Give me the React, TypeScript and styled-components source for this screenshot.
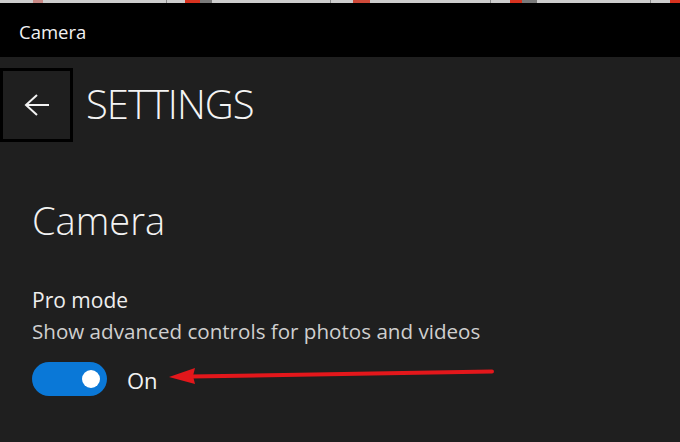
import React from "react";
import styled, { createGlobalStyle } from "styled-components";

const Global = createGlobalStyle`
  html, body { margin: 0; padding: 0; background: #1f1f1f; }
  body { font-family: "Open Sans", "Noto Sans", sans-serif; }
`;

const Window = styled.div`
  width: 680px;
  height: 442px;
  display: flex;
  flex-direction: column;
  background: #1f1f1f;
  overflow: hidden;
`;

const TopStrip = styled.div`
  height: 3px;
  flex: none;
  background: linear-gradient(
    to right,
    #cdcdcd 0 33px, #c98a86 33px 43px, #cdcdcd 43px 166px, #8a8a8a 166px 167px,
    #cdcdcd 167px 185px, #d8321f 185px 200px, #7a7a7a 200px 212px, #cdcdcd 212px 330px,
    #8a8a8a 330px 331px, #cdcdcd 331px 353px, #cf4a3a 353px 370px, #cdcdcd 370px 490px,
    #8a8a8a 490px 491px, #cdcdcd 491px 510px, #d8321f 510px 522px, #7a7a7a 522px 537px,
    #cdcdcd 537px 650px, #8a8a8a 650px 651px, #cdcdcd 651px 670px, #d8321f 670px 680px
  );
`;

const TitleBar = styled.div`
  height: 54px;
  flex: none;
  background: #000;
  display: flex;
  align-items: center;
  padding-left: 19px;
  color: #f2f2f2;
  font-size: 18.5px;
  padding-top: 2px;
  box-sizing: border-box;
`;

const Body = styled.div`
  flex: 1;
  display: flex;
  flex-direction: column;
`;

const Header = styled.div`
  display: flex;
  align-items: center;
  gap: 13px;
  margin-top: 11px;
`;

const BackButton = styled.div`
  width: 73px;
  height: 74px;
  box-sizing: border-box;
  border: 3px solid #000;
  display: flex;
  align-items: center;
  justify-content: center;
`;

const PageTitle = styled.div`
  color: #f4f4f4;
  font-size: 40px;
  font-weight: 300;
  letter-spacing: -1px;
  line-height: 1;
  margin-top: -2px;
`;

const Content = styled.div`
  padding-left: 32px;
  display: flex;
  flex-direction: column;
`;

const SectionTitle = styled.div`
  color: #f2f2f2;
  font-size: 38px;
  font-weight: 300;
  line-height: 1;
  margin-top: 59px;
`;

const Label = styled.div`
  color: #eeeeee;
  font-size: 21px;
  line-height: 1;
  margin-top: 51px;
`;

const Description = styled.div`
  color: #cfcfcf;
  font-size: 20.6px;
  line-height: 1;
  margin-top: 10px;
`;

const ToggleRow = styled.div`
  display: flex;
  align-items: center;
  margin-top: 20px;
`;

const Toggle = styled.div<{ on: boolean }>`
  width: 75px;
  height: 34px;
  border-radius: 17px;
  background: ${(p) => (p.on ? "#0a78d7" : "transparent")};
  display: flex;
  align-items: center;
  justify-content: ${(p) => (p.on ? "flex-end" : "flex-start")};
  padding: 0 7px;
  box-sizing: border-box;
`;

const Knob = styled.div`
  width: 18px;
  height: 18px;
  border-radius: 50%;
  background: #fff;
`;

const ToggleText = styled.div`
  color: #f2f2f2;
  font-size: 22px;
  margin-left: 20px;
  line-height: 1;
  margin-top: 2px;
`;

const Arrow = styled.svg`
  margin-left: 11px;
  margin-top: -5px;
  flex: none;
`;

export default function App() {
  return (
    <Window>
      <Global />
      <TopStrip />
      <TitleBar>Camera</TitleBar>
      <Body>
        <Header>
          <BackButton>
            <svg width="30" height="24" viewBox="0 0 30 24">
              <path d="M15 2 L4 12 L15 22 M4 12 H27" stroke="#f2f2f2" strokeWidth="2" fill="none" />
            </svg>
          </BackButton>
          <PageTitle>SETTINGS</PageTitle>
        </Header>
        <Content>
          <SectionTitle>Camera</SectionTitle>
          <Label>Pro mode</Label>
          <Description>Show advanced controls for photos and videos</Description>
          <ToggleRow>
            <Toggle on={true}>
              <Knob />
            </Toggle>
            <ToggleText>On</ToggleText>
            <Arrow width="326" height="22" viewBox="0 0 326 22">
              <polygon points="0,12 26,3 24,11 26,19" fill="#e3171b" />
              <path d="M22 11.5 L323 6.5" stroke="#e3171b" strokeWidth="4" strokeLinecap="round" />
            </Arrow>
          </ToggleRow>
        </Content>
      </Body>
    </Window>
  );
}
